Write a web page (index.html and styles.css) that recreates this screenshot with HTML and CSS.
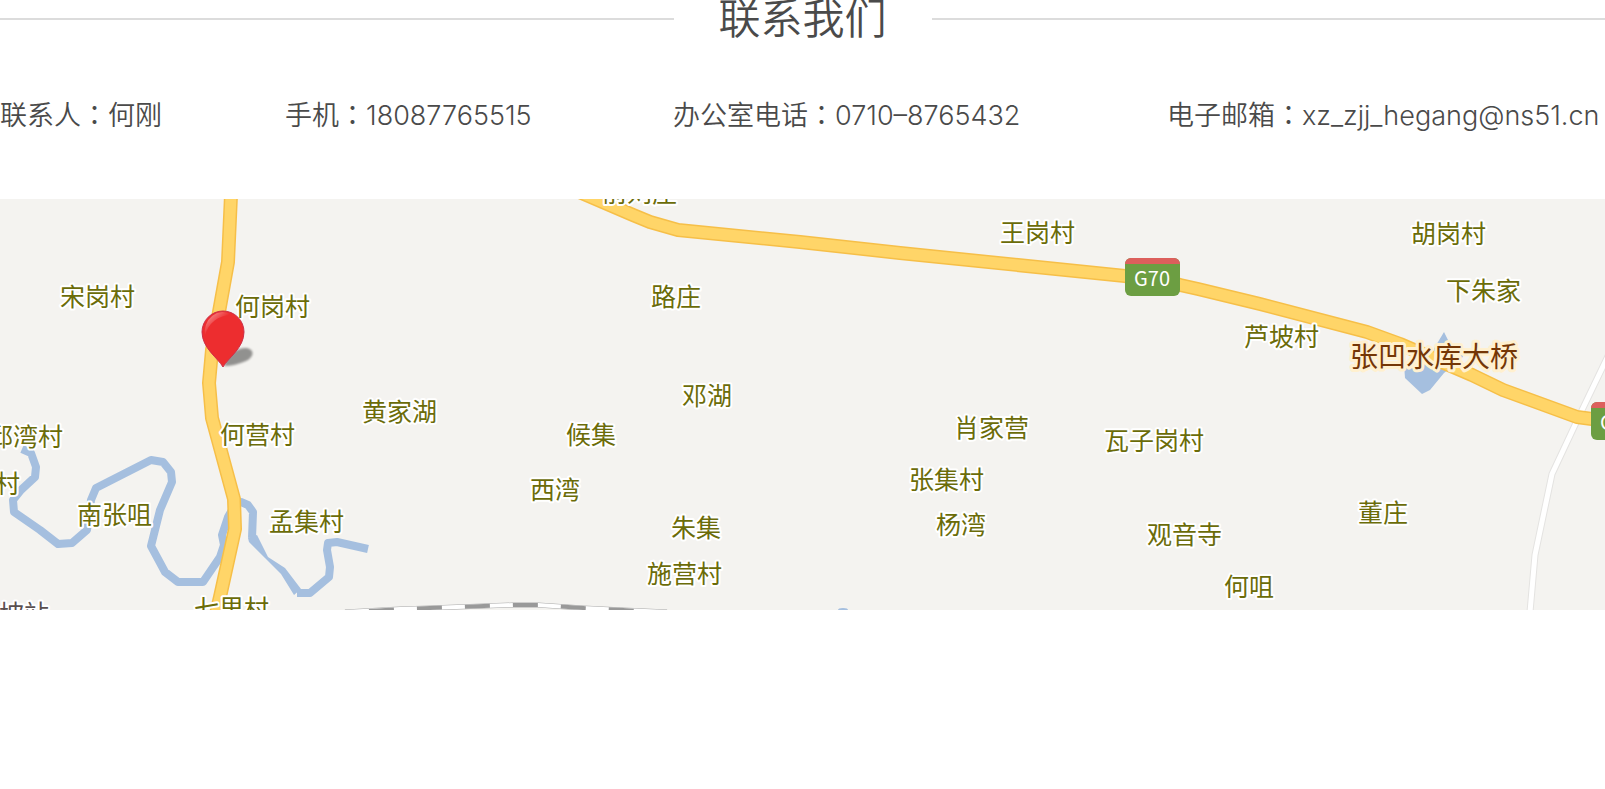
FILE: index.html
```html
<!DOCTYPE html>
<html lang="zh-CN">
<head>
<meta charset="utf-8">
<meta name="viewport" content="width=device-width, initial-scale=1">
<title>联系我们</title>
<link rel="stylesheet" href="styles.css">
</head>
<body>
<main class="contact">
  <h1 class="contact-title">联系我们</h1>
  <ul class="contact-list">
    <li>联系人<span class="colon" lang="zh-TW">：</span>何刚</li>
    <li>手机<span class="colon" lang="zh-TW">：</span><span class="latin">18087765515</span></li>
    <li>办公室电话<span class="colon" lang="zh-TW">：</span><span class="latin">0710–8765432</span></li>
    <li>电子邮箱<span class="colon" lang="zh-TW">：</span><span class="latin">xz_zjj_hegang@ns51.cn</span></li>
  </ul>
  <svg class="map" viewBox="0 199 1605 411" role="img" aria-label="地图">
    <defs>
      <filter id="soft" x="-30%" y="-50%" width="160%" height="200%"><feGaussianBlur stdDeviation="1.2"/></filter>
      <linearGradient id="shine" x1="0" y1="0" x2="1" y2="1">
        <stop offset="0" stop-color="#fff" stop-opacity=".6"/>
        <stop offset=".5" stop-color="#fff" stop-opacity="0"/>
      </linearGradient>
    </defs>

    <g class="river">
      <path d="M22 449 31 453 36 467 35 477 21 490 13 500 14 512 40 530 58 544 72 543 87 530 90 510 91 500 96 488 151 460 163 462 171 472 172 482 160 510 151 546 165 572 178 582 203 582 220 557 224 545 222 535 228 517 236 503 241 502 248 505 253 512 252 538"/>
      <path d="M297 593 310 593 329 577 330 567 327 550 328 543 337 542 368 549"/>
      <path class="water" d="M248 538 257 535 268 557 285 568 301 589 294 595 281 574 265 558 249 542Z"/>
      <path class="water" d="M1444 332 1449 342 1464 354 1462 358 1444 373 1430 390 1422 394 1405 378 1404 364 1432 352Z"/>
      <ellipse class="water" cx="843" cy="610" rx="5" ry="2"/>
    </g>

    <g class="lane">
      <path class="lane-edge" d="M1608 356 1583 408 1552 474 1535 555 1530 612"/>
      <path class="lane-fill" d="M1608 356 1583 408 1552 474 1535 555 1530 612"/>
    </g>

    <g class="rail">
      <path class="rail-edge" d="M345 612 400 609 430 608 513 605 538 605 583 608 623 610 667 612"/>
      <path class="rail-fill" d="M345 612 400 609 430 608 513 605 538 605 583 608 623 610 667 612"/>
      <path class="rail-dash" d="M369 611 400 609 430 608 513 605 538 605 583 608 623 610 640 611"/>
    </g>

    <g class="road">
      <path class="road-edge" d="M231 195 228 262 219 312 212 350 209 383 212 418 234 499 235 529 220 597 216 614"/>
      <path class="road-edge" d="M577 191 633 215 650 222 678 230 800 242 900 253 1125 276 1180 285 1198 289 1260 304 1367 332 1400 344 1472 375 1503 390 1577 417 1592 419 1608 421"/>
      <path class="road-fill" d="M231 195 228 262 219 312 212 350 209 383 212 418 234 499 235 529 220 597 216 614"/>
      <path class="road-fill" d="M577 191 633 215 650 222 678 230 800 242 900 253 1125 276 1180 285 1198 289 1260 304 1367 332 1400 344 1472 375 1503 390 1577 417 1592 419 1608 421"/>
    </g>

    <g class="shield">
      <rect class="shield-body" x="1125" y="258" width="55" height="38" rx="6"/>
      <path class="shield-top" d="M1125 264a6 6 0 0 1 6-6h43a6 6 0 0 1 6 6z"/>
      <text x="1152" y="286" text-anchor="middle">G70</text>
      <rect class="shield-body" x="1591" y="402" width="55" height="38" rx="6"/>
      <path class="shield-top" d="M1591 408a6 6 0 0 1 6-6h43a6 6 0 0 1 6 6z"/>
      <text x="1618" y="430" text-anchor="middle">G70</text>
    </g>

    <g class="place">
      <text x="602" y="202">前刘庄</text>
      <text x="60" y="306">宋岗村</text>
      <text x="235" y="316">何岗村</text>
      <text x="651" y="306">路庄</text>
      <text x="1000" y="242">王岗村</text>
      <text x="1411" y="243">胡岗村</text>
      <text x="1446" y="300">下朱家</text>
      <text x="1244" y="346">芦坡村</text>
      <text x="362" y="421">黄家湖</text>
      <text x="682" y="405">邓湖</text>
      <text x="566" y="444">候集</text>
      <text x="530" y="499">西湾</text>
      <text x="671" y="537">朱集</text>
      <text x="647" y="583">施营村</text>
      <text x="954" y="437">肖家营</text>
      <text x="1104" y="450">瓦子岗村</text>
      <text x="909" y="489">张集村</text>
      <text x="936" y="534">杨湾</text>
      <text x="1147" y="544">观音寺</text>
      <text x="1224" y="596">何咀</text>
      <text x="1358" y="522">董庄</text>
      <text x="-12" y="446">邱湾村</text>
      <text x="-5" y="493">村</text>
      <text x="220" y="444">何营村</text>
      <text x="77" y="524">南张咀</text>
      <text x="269" y="531">孟集村</text>
      <text x="194" y="618">七里村</text>
      <text class="station" x="-1" y="623">坡站</text>
      <text class="bridge" x="1434" y="367" text-anchor="middle">张凹水库大桥</text>
    </g>

    <g class="pin">
      <path class="pin-shadow" filter="url(#soft)" d="M224 366C228 354 238 347 247 348C255 350 254 357 246 361C239 364 231 366 224 366Z"/>
      <path class="pin-body" d="M223 367C218 358 202 348 202 332A21 21 0 0 1 244 332C244 348 228 358 223 367Z"/>
      <path fill="url(#shine)" d="M205 336A18 20 0 0 1 232 315C218 315 208 323 205 336Z"/>
    </g>
  </svg>
</main>
</body>
</html>
```
FILE: styles.css
```css
* {
  box-sizing: border-box;
}

body {
  margin: 0;
  background: #fff;
  color: #4a4a4a;
  font-family: "Noto Sans CJK SC", sans-serif;
}

.contact {
  overflow: hidden;
}

.contact-title {
  display: flex;
  align-items: center;
  gap: 45px;
  margin: 0;
  font-size: 42px;
  font-weight: 350;
  line-height: 32px;
}

.contact-title::before,
.contact-title::after {
  content: "";
  flex: 1;
  height: 2px;
  margin-top: 6px;
  background: #dcdcdc;
}

.contact-list {
  display: grid;
  grid-template-columns: 285fr 388fr 494fr 438fr;
  margin: 0;
  padding: 62px 0 65px;
  list-style: none;
  font-size: 27px;
  font-weight: 350;
  line-height: 40px;
  white-space: nowrap;
}

.contact-list li {
  min-width: 0;
  height: 40px;
}

.colon {
  font-family: "Noto Sans CJK TC", sans-serif;
}

.latin {
  font-family: Inter, "Open Sans", sans-serif;
  font-size: 27px;
  font-weight: 300;
}

.map {
  display: block;
  width: 100%;
  height: auto;
  background: #f4f3f0;
}

.map path {
  stroke-linejoin: round;
}

.river path {
  fill: none;
  stroke: #a5bfdf;
  stroke-width: 8;
}

.river .water {
  fill: #a5bfdf;
  stroke: none;
}

.lane path,
.rail path,
.road path {
  fill: none;
}

.lane-edge {
  stroke: #e4e3e1;
  stroke-width: 7;
}

.lane-fill {
  stroke: #fff;
  stroke-width: 5;
}

.rail-edge {
  stroke: #aaa;
  stroke-width: 5;
}

.rail-fill {
  stroke: #fff;
  stroke-width: 4;
}

.rail-dash {
  stroke: #999;
  stroke-width: 4;
  stroke-dasharray: 25 23;
}

.road-edge {
  stroke: #f6bf48;
  stroke-width: 14;
}

.road-fill {
  stroke: #ffd568;
  stroke-width: 11;
}

.shield-body {
  fill: #6c9e42;
}

.shield-top {
  fill: #dc5f5c;
}

.shield text {
  fill: #fff;
  font-size: 20px;
}

.place text {
  fill: #6b6c09;
  stroke: #fff;
  stroke-width: 4;
  stroke-linejoin: round;
  paint-order: stroke;
  font-size: 25px;
}

.place .station {
  fill: #5a4f4f;
}

.place .bridge {
  fill: #743606;
  stroke: #fff0cf;
  stroke-width: 6;
  font-size: 28px;
}

.pin-shadow {
  fill: #000;
  opacity: 0.4;
}

.pin-body {
  fill: #ed2d2f;
  stroke: #cc2f49;
  stroke-width: 1;
}
```
